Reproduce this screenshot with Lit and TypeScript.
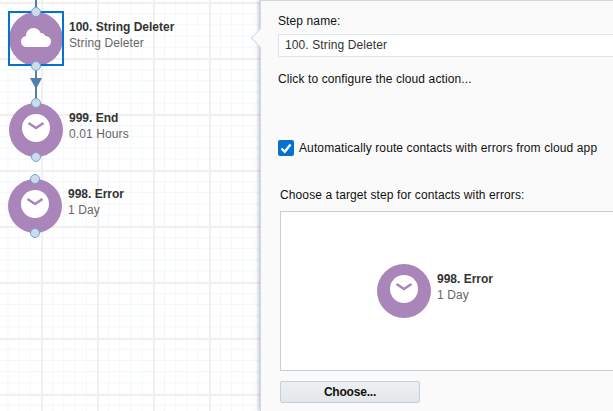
import { LitElement, html, css } from "lit";
import { customElement } from "lit/decorators.js";

const clock = html`<svg class="glyph" viewBox="0 0 54 54"><circle cx="27" cy="27" r="27" fill="#a985b9"/><circle cx="27" cy="25" r="14" fill="#fff"/><path d="M19.500 20 27 25 34.500 20" fill="none" stroke="#a985b9" stroke-width="2.600"/></svg>`;
const cloud = html`<svg class="glyph" viewBox="0 0 54 54"><circle cx="27" cy="27" r="27" fill="#a985b9"/><g fill="#fff"><circle cx="17.500" cy="29.500" r="5.500"/><circle cx="24.500" cy="23.500" r="7.500"/><circle cx="32" cy="25.500" r="4.500"/><circle cx="36.500" cy="29.500" r="5.500"/><rect x="17.500" y="27" width="19" height="8"/></g></svg>`;

@customElement("app-root")
export class AppRoot extends LitElement {
  static styles = css`
    :host { display: block; width: 613px; height: 411px; overflow: hidden; position: relative; font-family: "Liberation Sans", Arial, sans-serif; font-size: 12px; color: #111; letter-spacing: 0.11px; }
    .canvas { position: absolute; inset: 0; background-color: #fff;
      background-image:
        linear-gradient(#f3eeef 2px, transparent 2px),
        linear-gradient(90deg, #f3eeef 2px, transparent 2px),
        linear-gradient(#f2f7fb 1px, transparent 1px),
        linear-gradient(90deg, #f2f7fb 1px, transparent 1px);
      background-size: 56px 56px, 56px 56px, 11.200px 11.200px, 11.200px 11.200px;
      background-position: 0 2px, 41px 0, 0 2px, 41px 0; }
    .node { position: absolute; width: 54px; height: 54px; }
    .glyph { display: block; width: 54px; height: 54px; }
    .sel { position: absolute; left: -1px; top: -1px; width: 52px; height: 51px; border: 2px solid #0572ce; }
    .port { position: absolute; left: 22px; width: 8px; height: 8px; border-radius: 50%; background: #cfdbe6; border: 1px solid #69a7dd; }
    .port.t { top: -5px; } .port.b { bottom: -5px; }
    .label { position: absolute; left: 60px; top: 7px; white-space: nowrap; line-height: 16px; }
    .label b { display: block; color: #333; font-weight: 700; letter-spacing: 0; }
    .label span { display: block; color: #666; }
    .wire { position: absolute; left: 34.500px; width: 2.500px; background: #4f7fab; }
    .arrow { position: absolute; left: 30px; top: 78px; width: 0; height: 0; border-left: 6px solid transparent; border-right: 6px solid transparent; border-top: 11px solid #4f7fab; }
    .panel { position: absolute; left: 260px; top: 0; width: 353px; height: 411px; box-sizing: border-box; background: #fafafa; border-left: 1px solid #cfd8e2; border-top: 1px solid #cfd8e2; box-shadow: -2px 0 3px rgba(60,80,100,.28); padding: 13px 0 0 17px; display: flex; flex-direction: column; }
    .tip { position: absolute; left: -13px; top: 26px; width: 13px; height: 22px; overflow: hidden; }
    .tip::before { content: ""; position: absolute; left: 6px; top: 3px; width: 14px; height: 14px; background: #fafafa; border: 1px solid #d3dbe3; transform: rotate(45deg); }
    .step { line-height: 14px; }
    .name { margin-top: 6px; height: 23px; box-sizing: border-box; border: 1px solid #dfe4ea; border-right: none; border-radius: 2px 0 0 2px; background: #fff; padding-left: 6px; line-height: 21px; color: #333; }
    .cfg { margin-top: 15px; line-height: 14px; }
    .check { margin-top: 54px; display: flex; align-items: center; gap: 5px; line-height: 16px; height: 16px; }
    .box { width: 16px; height: 16px; display: block; }
    .choose { margin: 32px 0 0 2px; line-height: 14px; }
    .target { margin: 9px 0 0 2px; height: 160px; box-sizing: border-box; border: 1px solid #c3cfda; border-right: none; background: #fff; position: relative; display: flex; align-items: center; padding-left: 96px; }
    .inner { position: relative; width: 54px; height: 54px; }
    .btn { margin: 10px 0 0 2px; width: 140px; height: 22px; box-sizing: border-box; border: 1px solid #c3cfda; border-radius: 2px; background: linear-gradient(#eef0f2, #e4e7e9); font: 700 12px "Liberation Sans", Arial, sans-serif; letter-spacing: -0.2px; color: #111; padding: 0; }
  `;

  private node(top: number, left: number, icon: unknown, name: string, sub: string, selected = false) {
    return html`<div class="node" style="left:${left}px;top:${top}px">
      ${icon}
      ${selected ? html`<div class="sel"></div>` : ""}
      <div class="port t"></div><div class="port b"></div>
      <div class="label"><b>${name}</b><span>${sub}</span></div>
    </div>`;
  }

  render() {
    return html`
      <div class="canvas">
        <div class="wire" style="top:0;height:10px"></div>
        <div class="wire" style="top:66px;height:36px"></div>
        <div class="arrow"></div>
        ${this.node(12, 9, cloud, "100. String Deleter", "String Deleter", true)}
        ${this.node(103, 9, clock, "999. End", "0.01 Hours")}
        ${this.node(179, 8, clock, "998. Error", "1 Day")}
      </div>
      <section class="panel">
        <div class="tip"></div>
        <div class="step">Step name:</div>
        <div class="name">100. String Deleter</div>
        <div class="cfg">Click to configure the cloud action...</div>
        <div class="check">
          <svg class="box" viewBox="0 0 16 16"><rect width="16" height="16" rx="2" fill="#0572ce"/><path d="M3.500 8.500 6.800 11.800 12.500 4.500" fill="none" stroke="#fff" stroke-width="2.400"/></svg>
          <span>Automatically route contacts with errors from cloud app</span>
        </div>
        <div class="choose">Choose a target step for contacts with errors:</div>
        <div class="target">
          <div class="inner">${clock}<div class="label"><b>998. Error</b><span>1 Day</span></div></div>
        </div>
        <button class="btn">Choose...</button>
      </section>
    `;
  }
}
